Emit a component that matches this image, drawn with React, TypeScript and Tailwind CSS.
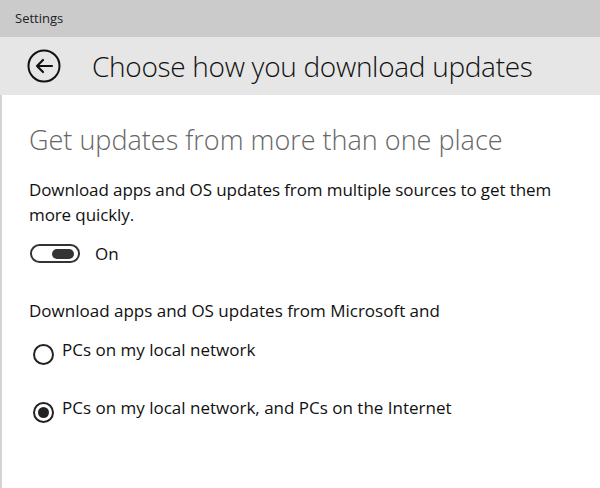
import { useState } from 'react';

const font = { fontFamily: '"Open Sans", "Noto Sans", sans-serif' };

function BackIcon() {
  return (
    <svg width="34" height="34" viewBox="0 0 34 34" fill="none">
      <circle cx="17" cy="17" r="15.5" stroke="#111" strokeWidth="2" />
      <path d="M25 17H10M16 11l-6 6 6 6" stroke="#111" strokeWidth="2.2" strokeLinecap="round" strokeLinejoin="round" />
    </svg>
  );
}

function Toggle({ on }: { on: boolean }) {
  return (
    <div className="w-[50px] h-[19px] rounded-full border-2 border-[#333] flex items-center justify-end px-[4px]">
      {on && <div className="w-[22px] h-[10px] rounded-full bg-[#333]" />}
    </div>
  );
}

function Radio({ checked }: { checked: boolean }) {
  return (
    <div className="w-[21px] h-[21px] rounded-full border-2 border-[#222] flex items-center justify-center shrink-0">
      {checked && <div className="w-[11px] h-[11px] rounded-full bg-[#222]" />}
    </div>
  );
}

export default function App() {
  const [choice, setChoice] = useState(1);

  return (
    <div className="w-[600px] h-[488px] bg-white overflow-hidden flex flex-col" style={font}>
      <div className="h-[37px] bg-[#cbcbcb] flex items-center px-[15px] text-[13px] text-[#222]">
        Settings
      </div>

      <div className="h-[58px] bg-[#e6e6e6] flex items-center pl-[27px]">
        <BackIcon />
        <h1 className="ml-[31px] text-[28px] font-light text-[#111] tracking-[-0.3px]">
          Choose how you download updates
        </h1>
      </div>

      <div className="flex-1 border-l-2 border-[#d4d4d4] pl-[27px] pt-[27px]">
        <h2 className="text-[27px] font-light text-[#666] leading-[36px]">
          Get updates from more than one place
        </h2>

        <p className="mt-[19px] text-[17px] leading-[25px] text-[#111] w-[545px] tracking-[-0.1px]">
          Download apps and OS updates from multiple sources to get them more quickly.
        </p>

        <div className="mt-[14px] flex items-center gap-[15px] pl-[1px]">
          <Toggle on />
          <span className="text-[17px] leading-[25px] text-[#111]">On</span>
        </div>

        <p className="mt-[32px] text-[17px] leading-[25px] text-[#111]">
          Download apps and OS updates from Microsoft and
        </p>

        <div className="mt-[21px] flex flex-col gap-[37px]">
          {['PCs on my local network', 'PCs on my local network, and PCs on the Internet'].map((label, i) => (
            <button key={i} onClick={() => setChoice(i)} className="flex items-start gap-[8px] text-left pl-[4px]">
              <Radio checked={choice === i} />
              <span className="text-[17px] leading-[25px] text-[#111] -mt-[7px]">{label}</span>
            </button>
          ))}
        </div>
      </div>
    </div>
  );
}
